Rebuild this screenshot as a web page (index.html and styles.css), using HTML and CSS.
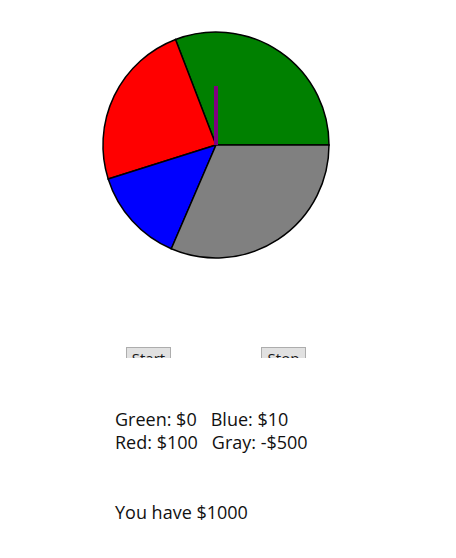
FILE: index.html
```html
<!DOCTYPE html>
<html>
<head>
<meta charset="utf-8">
<link rel="stylesheet" href="styles.css">
</head>
<body>
<div class="stage">
<svg class="wheel" width="456" height="300" viewBox="0 0 456 300">
  <path d="M216,145 L329,145 A113,113 0 0 0 175.5,39.5 Z" fill="#008000" stroke="#000" stroke-width="1.5"/>
  <path d="M216,145 L175.5,39.5 A113,113 0 0 0 108.2,179 Z" fill="#ff0000" stroke="#000" stroke-width="1.5"/>
  <path d="M216,145 L108.2,179 A113,113 0 0 0 171.3,248.8 Z" fill="#0000ff" stroke="#000" stroke-width="1.5"/>
  <path d="M216,145 L171.3,248.8 A113,113 0 0 0 329,145 Z" fill="#808080" stroke="#000" stroke-width="1.5"/>
  <rect x="214" y="86" width="4" height="59" fill="#800080"/>
</svg>
</div>
<div class="controls">
  <button class="btn btn-start">Start</button>
  <button class="btn btn-stop">Stop</button>
</div>
<div class="legend">
  <div class="row">Green: $0   Blue: $10</div>
  <div class="row">Red: $100   Gray: -$500</div>
</div>
<div class="balance">You have $1000</div>
</body>
</html>
```
FILE: styles.css
```css
html, body {
  margin: 0;
  padding: 0;
  background: #fff;
}
body {
  font-family: "Open Sans", "Noto Sans", sans-serif;
  color: #111;
  width: 456px;
  height: 558px;
  overflow: hidden;
}
.stage {
  height: 300px;
}
.wheel {
  display: block;
}
.controls {
  margin-top: 47px;
  height: 11px;
  overflow: hidden;
  display: flex;
  align-items: flex-start;
  padding-left: 126px;
  gap: 90px;
}
.btn {
  font-family: "Open Sans", "Noto Sans", sans-serif;
  font-size: 15px;
  line-height: 18px;
  height: 22px;
  padding: 0 3px;
  margin: 0;
  background: #e1e1e1;
  border: 1px solid #adadad;
  border-radius: 0;
  color: #1a1a1a;
  width: 45px;
}
.legend {
  margin-top: 50px;
  padding-left: 115px;
  font-size: 18px;
  line-height: 23px;
}
.row {
  white-space: pre;
}
.balance {
  margin-top: 47px;
  padding-left: 115px;
  font-size: 18px;
  line-height: 23px;
}
```
